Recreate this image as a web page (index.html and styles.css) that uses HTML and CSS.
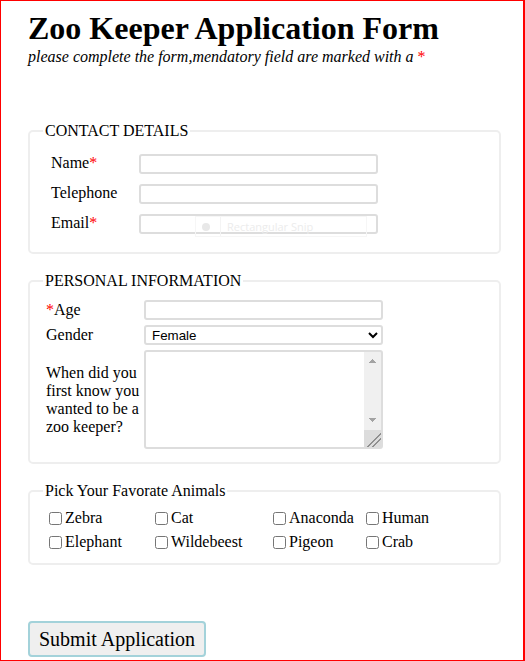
FILE: index.html
```html
<!DOCTYPE html>
<html lang="en">
<head>
<meta charset="utf-8">
<title>Zoo Keeper Application Form</title>
<link rel="stylesheet" href="styles.css">
</head>
<body>
<div class="page">
  <h1 class="title">Zoo Keeper Application Form</h1>
  <p class="subtitle">please complete the form,mendatory field are marked with a <span class="req">*</span></p>
  <form class="form">
    <fieldset class="group group-contact">
      <legend class="legend">CONTACT DETAILS</legend>
      <div class="contact-grid">
        <label class="field-label">Name<span class="req">*</span></label>
        <input class="text-input" type="text">
        <label class="field-label">Telephone</label>
        <input class="text-input" type="text">
        <label class="field-label">Email<span class="req">*</span></label>
        <input class="text-input" type="text">
      </div>
    </fieldset>
    <fieldset class="group group-personal">
      <legend class="legend">PERSONAL INFORMATION</legend>
      <div class="personal-grid">
        <label class="field-label"><span class="req">*</span>Age</label>
        <input class="text-input" type="text">
        <label class="field-label">Gender</label>
        <select class="select-input">
          <option>Female</option>
          <option>Male</option>
        </select>
        <label class="field-label">When did you first know you wanted to be a zoo keeper?</label>
        <textarea class="text-area"></textarea>
      </div>
    </fieldset>
    <fieldset class="group group-animals">
      <legend class="legend">Pick Your Favorate Animals</legend>
      <div class="animal-grid">
        <label class="animal"><input class="check" type="checkbox"><span>Zebra</span></label>
        <label class="animal"><input class="check" type="checkbox"><span>Cat</span></label>
        <label class="animal"><input class="check" type="checkbox"><span>Anaconda</span></label>
        <label class="animal"><input class="check" type="checkbox"><span>Human</span></label>
        <label class="animal"><input class="check" type="checkbox"><span>Elephant</span></label>
        <label class="animal"><input class="check" type="checkbox"><span>Wildebeest</span></label>
        <label class="animal"><input class="check" type="checkbox"><span>Pigeon</span></label>
        <label class="animal"><input class="check" type="checkbox"><span>Crab</span></label>
      </div>
    </fieldset>
    <button class="submit" type="button">Submit Application</button>
  </form>
  <div class="snip"><span class="snip-dot"></span><span class="snip-sep"></span><span class="snip-text">Rectangular Snip</span></div>
</div>
</body>
</html>
```
FILE: styles.css
```css
html, body {
  margin: 0;
  padding: 0;
  background: #ffffff;
}
body {
  font-family: "Liberation Serif", "Times New Roman", serif;
  font-size: 16px;
  color: #000;
}
.page {
  position: relative;
  box-sizing: border-box;
  width: 525px;
  height: 661px;
  border: 1px solid #ff0000;
  border-right-width: 2px;
  padding: 9px 0 0 27px;
  overflow: hidden;
}
.title {
  margin: 0;
  font-size: 32px;
  font-weight: bold;
  line-height: normal;
}
.subtitle {
  margin: 1px 0 0 0;
  font-style: italic;
  line-height: normal;
}
.req {
  color: #ff0000;
  font-style: normal;
}
.form {
  margin-top: 56px;
  display: flex;
  flex-direction: column;
  align-items: flex-start;
}
.group {
  box-sizing: border-box;
  width: 473px;
  margin: 0;
  padding: 0 0 0 13px;
  border: 2px solid #eeeeee;
  border-radius: 5px;
  min-width: 0;
}
.legend {
  padding: 0 2px;
  line-height: normal;
}
.group-contact {
  padding-top: 14px;
  padding-bottom: 18px;
}
.group-personal {
  margin-top: 18px;
  padding-top: 10px;
  padding-bottom: 13px;
}
.group-animals {
  margin-top: 18px;
  padding-top: 9px;
  padding-bottom: 12px;
}
.contact-grid {
  display: grid;
  grid-template-columns: 88px 239px;
  row-gap: 10px;
  align-items: center;
  margin-left: 8px;
}
.personal-grid {
  display: grid;
  grid-template-columns: 98px 239px;
  row-gap: 5px;
  align-items: center;
  margin-left: 3px;
}
.field-label {
  line-height: normal;
  margin-top: -2px;
}
.personal-grid .field-label {
  margin-top: 0;
}
.text-input {
  box-sizing: border-box;
  width: 239px;
  height: 20px;
  margin: 0;
  border: 2px solid #dddddd;
  border-radius: 3px;
  background: #fff;
  padding: 1px 2px;
  font-family: "Liberation Sans", Arial, sans-serif;
  font-size: 13.33px;
}
.select-input {
  box-sizing: border-box;
  width: 239px;
  height: 20px;
  margin: 0;
  border: 2px solid #dddddd;
  border-radius: 3px;
  background-color: #fff;
  padding: 0 0 0 2px;
  font-family: "Liberation Sans", Arial, sans-serif;
  font-size: 13.33px;
  color: #000;
}
.text-area {
  box-sizing: border-box;
  width: 239px;
  height: 99px;
  margin: 0;
  padding: 2px 19px 2px 2px;
  border: 2px solid #dddddd;
  border-radius: 3px;
  overflow: hidden;
  resize: none;
  font-family: "Liberation Mono", monospace;
  font-size: 13.33px;
  background-color: #ffffff;
  background-repeat: no-repeat;
  background-image:
    linear-gradient(135deg, #dcdcdc 0 58%, #8f8f8f 58% 63%, #dcdcdc 63% 73%, #8f8f8f 73% 78%, #dcdcdc 78%),
    linear-gradient(to bottom right, transparent 50%, #a3a3a3 50%),
    linear-gradient(to bottom left, transparent 50%, #a3a3a3 50%),
    linear-gradient(to top right, transparent 50%, #a3a3a3 50%),
    linear-gradient(to top left, transparent 50%, #a3a3a3 50%),
    linear-gradient(#f0f0f0, #f0f0f0);
  background-size:
    17px 17px,
    4px 4px,
    4px 4px,
    4px 4px,
    4px 4px,
    17px 100%;
  background-position:
    right bottom,
    right 8px top 7px,
    right 4px top 7px,
    right 8px bottom 25px,
    right 4px bottom 25px,
    right top;
}
.animal-grid {
  display: grid;
  grid-template-columns: 106px 118px 93px auto;
  grid-auto-rows: 18px;
  row-gap: 6px;
  align-items: center;
  margin-left: 6px;
}
.animal {
  display: flex;
  align-items: center;
  gap: 3px;
  line-height: normal;
  white-space: nowrap;
}
.check {
  width: 13px;
  height: 13px;
  margin: 0;
}
.submit {
  box-sizing: border-box;
  margin-top: 56px;
  height: 36px;
  padding: 0 9px;
  border: 2px solid #a3d2da;
  border-radius: 4px;
  background: #efefef;
  font-family: "Liberation Serif", "Times New Roman", serif;
  font-size: 20px;
  color: #000;
  line-height: normal;
}
.snip {
  position: absolute;
  left: 194px;
  top: 215px;
  box-sizing: border-box;
  width: 172px;
  height: 21px;
  border: 1px solid #f6f6f6;
  display: flex;
  align-items: center;
}
.snip-dot {
  width: 8px;
  height: 8px;
  border-radius: 50%;
  background: #e8e8e8;
  margin-left: 6px;
}
.snip-sep {
  align-self: stretch;
  width: 1px;
  background: #f4f4f4;
  margin-left: 10px;
}
.snip-text {
  margin-left: 6px;
  font-family: "Open Sans", "Noto Sans", sans-serif;
  font-size: 11px;
  color: #ececec;
  white-space: nowrap;
}
```
